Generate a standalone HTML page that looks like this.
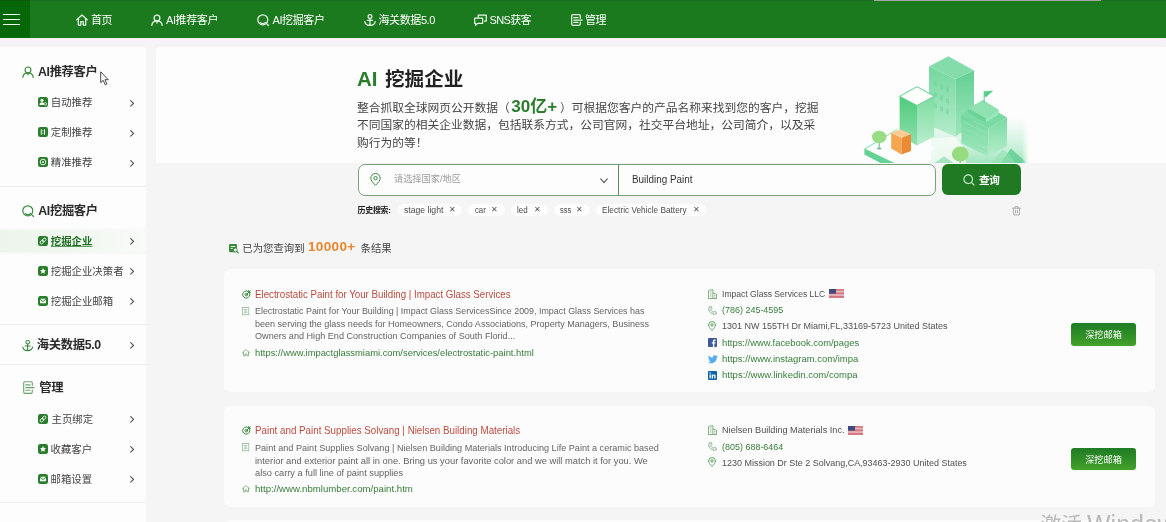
<!DOCTYPE html>
<html lang="zh-CN">
<head>
<meta charset="utf-8">
<title>AI 挖掘企业</title>
<style>
*{box-sizing:border-box;margin:0;padding:0}
html,body{width:1166px;height:522px;overflow:hidden;background:#f6f5f6;font-family:"Liberation Sans","Noto Sans CJK SC",sans-serif;color:#333}
body{position:relative}
.a{position:absolute}
.t{position:absolute;white-space:nowrap;height:16px;line-height:16px}
svg{position:absolute;overflow:visible}
/* header */
#hdr{left:0;top:0;width:1166px;height:37.7px;background:#1a7a1d;border-top:1.5px solid #1c6c20}
#burger{left:0;top:0;width:30px;height:37.7px;background:#056707;border-top:1.5px solid #075a0a}
.nav{color:#fff;font-size:11px;letter-spacing:-.4px;top:12px}
/* sidebar */
#side{left:0;top:46.5px;width:146px;height:480px;background:#fdfdfd;border-top-right-radius:4px}
.sep{left:0;width:146px;height:1px;background:#f0f0f0}
.h{font-weight:bold;font-size:12.3px;color:#2b2b2b;letter-spacing:-.33px}
.s{font-size:10.4px;color:#444;margin-top:.4px}
.chev{width:4.300px;height:6.800px;margin-top:1px;margin-left:.500px}
.sq{width:10px;height:10px;border-radius:2.3px;background:#2a7d2d;margin-top:.9px}

/* main */
#strip{left:0;top:38px;width:1166px;height:9px;background:linear-gradient(180deg,#f9f2f9 0,#f8f1f8 55%,#f4f4f4 60%,#f4f4f4 100%)}
#banner{left:156px;top:46.5px;width:1010px;height:116.5px;background:#fdfdfd;border-top-left-radius:4px}
.d{font-size:11.75px;color:#444;letter-spacing:0}
#sbox{left:357.5px;top:163.5px;width:578.4px;height:32px;border:1px solid #78a07a;border-radius:7px;background:#fdfdfd}
#sbtn{left:942px;top:164px;width:78.5px;height:31px;border-radius:6px;background:#1f7a23}
.pill{height:12.2px;border-radius:7px;background:#fdfdfd;top:203.6px}
.tg{font-size:8.4px;color:#4a4a4a;top:201.700px}
.x{font-size:8px;color:#555;top:202px}

.card{left:223.8px;width:930.8px;background:#fdfcfd;border-radius:6.5px}
.ti{font-size:10.8px;color:#b84b3d}
.ds{font-size:9.5px;color:#646464;height:13px;line-height:13px;margin-top:-.4px}
.u{font-size:9.8px;color:#347c38}
.r{font-size:9.6px;margin-top:.4px;color:#505050}
.rg{font-size:9.6px;margin-top:.4px;color:#367e3a}
.btn{left:1071px;width:65px;height:22.5px;border-radius:3px;background:linear-gradient(180deg,#1f7c25 0%,#2f8d27 50%,#45a22b 100%);color:#fff;font-size:9.2px;text-align:center;line-height:24px;white-space:nowrap;overflow:hidden}
</style>
</head>
<body>
<div id="root" style="position:absolute;left:0;top:0;width:1166px;height:522px;overflow:hidden;will-change:transform">
<!-- HEADER -->
<div id="hdr" class="a"></div>
<div id="burger" class="a"></div>
<div class="a" style="left:873.5px;top:0;width:227.5px;height:1.4px;background:#a6a6a2"></div>
<div class="a" style="left:3px;top:13.5px;width:17px;height:1.6px;background:#f2fbf2"></div>
<div class="a" style="left:3px;top:18.6px;width:17px;height:1.6px;background:#f2fbf2"></div>
<div class="a" style="left:3px;top:23.7px;width:17px;height:1.6px;background:#f2fbf2"></div>

<svg style="left:76px;top:13.8px" width="12" height="12" viewBox="0 0 12 12" fill="none" stroke="#e9f7e9" stroke-width="1.25" stroke-linejoin="round" stroke-linecap="round"><path d="M0.8 5.8 L6 1 L11.2 5.8 M2.3 5 V11 H4.8 V7.6 H7.2 V11 H9.7 V5"/></svg>
<div id="n1" class="t nav" style="left:91px">首页</div>

<svg style="left:151px;top:13.8px" width="12" height="12" viewBox="0 0 12 12" fill="none" stroke="#e9f7e9" stroke-width="1.25" stroke-linecap="round"><circle cx="6" cy="3.9" r="2.9"/><path d="M0.8 11.4 C1.2 8.2 3.4 6.9 6 6.9 S10.8 8.2 11.2 11.4 M6 7 V9"/></svg>
<div id="n2" class="t nav" style="left:166px">AI推荐客户</div>

<svg style="left:257px;top:13.8px" width="12" height="12" viewBox="0 0 12 12" fill="none" stroke="#e9f7e9" stroke-width="1.25" stroke-linecap="round"><circle cx="5.8" cy="5.8" r="5"/><path d="M3.2 8.6 C4.6 9.9 7.2 9.9 8.6 8.4 M9.6 9.6 L11.5 11.5"/></svg>
<div id="n3" class="t nav" style="left:272.5px">AI挖掘客户</div>

<svg style="left:364px;top:13.8px" width="12" height="12" viewBox="0 0 12 12" fill="none" stroke="#e9f7e9" stroke-width="1.25" stroke-linecap="round"><circle cx="6" cy="2.4" r="1.9"/><path d="M6 4.3 V11.3 M3.4 6.3 H8.6 M0.8 7.6 C1.2 10 3.4 11.3 6 11.3 S10.8 10 11.2 7.6"/></svg>
<div id="n4" class="t nav" style="left:378.5px">海关数据5.0</div>

<svg style="left:474px;top:13.8px" width="13" height="12" viewBox="0 0 13 12" fill="none" stroke="#e9f7e9" stroke-width="1.25" stroke-linejoin="round" stroke-linecap="round"><path d="M4.2 3.2 V1 H12.3 V7 H10.4 M0.7 4.2 H8.6 V9.4 H3.6 L1.6 11.3 V9.4 H0.7 Z"/></svg>
<div id="n5" class="t nav" style="left:489.5px;letter-spacing:-.65px">SNS获客</div>

<svg style="left:571px;top:13.8px" width="12" height="12" viewBox="0 0 12 12" fill="none" stroke="#e9f7e9" stroke-width="1.25" stroke-linejoin="round" stroke-linecap="round"><path d="M9.3 4.2 V1.9 Q9.3 0.7 8.1 0.7 H1.9 Q0.7 0.7 0.7 1.9 V10.1 Q0.7 11.3 1.9 11.3 H8.1 Q9.3 11.3 9.3 10.1 V8 M2.8 3.6 H7 M2.8 6 H11.2 M2.8 8.4 H7"/></svg>
<div id="n6" class="t nav" style="left:585px">管理</div>

<!-- SIDEBAR -->
<div id="side" class="a"></div>
<div class="a" style="left:0;top:229.500px;width:146px;height:22.500px;background:linear-gradient(90deg,#ecf4eb 0%,#f1f7f0 50%,#f9fbf9 100%);box-shadow:0 0 2px 1.5px #f4f8f3;clip-path:inset(-4px 0 -4px 0)"></div>
<div class="a sep" style="top:186px"></div>
<div class="a sep" style="top:324px"></div>
<div class="a sep" style="top:364px"></div>
<div class="a sep" style="top:502px"></div>


<!-- sidebar group 1 -->
<svg style="left:22px;top:66px" width="12" height="12" viewBox="0 0 12 12" fill="none" stroke="#3a8a3d" stroke-width="1.15" stroke-linecap="round"><circle cx="6" cy="3.9" r="2.9"/><path d="M0.8 11.4 C1.2 8.2 3.4 6.9 6 6.9 S10.8 8.2 11.2 11.4 M6 7 V9"/></svg>
<div id="s1" class="t h" style="left:38px;top:64px">AI推荐客户</div>
<!-- cursor -->
<svg style="left:100px;top:71px" width="9" height="15" viewBox="0 0 9 15"><path d="M0.7 0.8 V11.6 L3.2 9.3 L5.2 13.8 L6.9 13 L4.9 8.7 H8.2 Z" fill="#fff" stroke="#333" stroke-width="0.9" stroke-linejoin="round"/></svg>

<div class="a sq" style="left:38px;top:96.400px"></div>
<svg style="left:38px;top:96.400px;margin-top:.9px" width="10" height="10" viewBox="0 0 11 11" fill="#fff"><circle cx="4.4" cy="3.6" r="1.7"/><path d="M1.6 8.9 C1.6 6.6 2.8 5.7 4.4 5.7 C5.4 5.7 6 6 6.4 6.6 L6.4 8.9 Z"/><circle cx="8" cy="7.6" r="1.4" fill="none" stroke="#fff" stroke-width=".8"/></svg>
<div id="s2" class="t s" style="left:50.8px;top:95px">自动推荐</div>
<svg class="chev" style="left:129.5px;top:98.5px" viewBox="0 0 5 8" fill="none" stroke="#4a4a4a" stroke-width="1.25" stroke-linecap="round" stroke-linejoin="round"><path d="M0.8 0.8 L4.2 4 L0.8 7.2"/></svg>

<div class="a sq" style="left:38px;top:126.400px"></div>
<svg style="left:38px;top:126.400px;margin-top:.9px" width="10" height="10" viewBox="0 0 11 11" fill="none" stroke="#fff" stroke-width="1"><path d="M3.6 2.5 V8.5 M7.2 2.5 V8.5 M5.4 3.5 V4.6 M5.4 6.4 V7.5"/></svg>
<div id="s3" class="t s" style="left:50.8px;top:125px">定制推荐</div>
<svg class="chev" style="left:129.5px;top:128.5px" viewBox="0 0 5 8" fill="none" stroke="#4a4a4a" stroke-width="1.25" stroke-linecap="round" stroke-linejoin="round"><path d="M0.8 0.8 L4.2 4 L0.8 7.2"/></svg>

<div class="a sq" style="left:38px;top:156.400px"></div>
<svg style="left:38px;top:156.400px;margin-top:.9px" width="10" height="10" viewBox="0 0 11 11" fill="none" stroke="#fff" stroke-width="1"><circle cx="5.5" cy="5.5" r="3.1"/><circle cx="5.5" cy="5.5" r="1" fill="#fff" stroke="none"/></svg>
<div id="s4" class="t s" style="left:50.8px;top:155px">精准推荐</div>
<svg class="chev" style="left:129.5px;top:158.5px" viewBox="0 0 5 8" fill="none" stroke="#4a4a4a" stroke-width="1.25" stroke-linecap="round" stroke-linejoin="round"><path d="M0.8 0.8 L4.2 4 L0.8 7.2"/></svg>

<!-- sidebar group 2 -->
<svg style="left:22.300px;top:204.900px" width="12" height="12" viewBox="0 0 12 12" fill="none" stroke="#3a8a3d" stroke-width="1.15" stroke-linecap="round"><circle cx="5.8" cy="5.8" r="5"/><path d="M3.2 8.6 C4.6 9.9 7.2 9.9 8.6 8.4 M9.6 9.6 L11.5 11.5"/></svg>
<div id="s5" class="t h" style="left:38.300px;top:202.700px">AI挖掘客户</div>

<div class="a sq" style="left:38px;top:235.5px"></div>
<svg style="left:38px;top:235.5px;margin-top:.9px" width="10" height="10" viewBox="0 0 11 11" fill="none" stroke="#fff" stroke-width=".95" stroke-linecap="round"><g transform="rotate(-45 5.500 5.500)"><rect x="1.600" y="4" width="4.600" height="3" rx="1.500"/><rect x="4.800" y="4" width="4.600" height="3" rx="1.500"/></g></svg>
<div id="s6" class="t s" style="left:50.8px;top:233.5px;color:#1f6f23;font-weight:bold;text-decoration:underline;text-underline-offset:1px;text-decoration-thickness:.7px;text-decoration-color:#5d9a60">挖掘企业</div>
<svg class="chev" style="left:129.5px;top:237px" viewBox="0 0 5 8" fill="none" stroke="#4a4a4a" stroke-width="1.25" stroke-linecap="round" stroke-linejoin="round"><path d="M0.8 0.8 L4.2 4 L0.8 7.2"/></svg>

<div class="a sq" style="left:38px;top:265.5px"></div>
<svg style="left:38px;top:265.5px;margin-top:.9px" width="10" height="10" viewBox="0 0 11 11" fill="#fff"><path d="M5.5 2.2 L6.5 4.3 L8.8 4.6 L7.1 6.2 L7.5 8.5 L5.5 7.4 L3.5 8.5 L3.9 6.2 L2.2 4.6 L4.5 4.3 Z"/></svg>
<div id="s7" class="t s" style="left:50.8px;top:263.5px">挖掘企业决策者</div>
<svg class="chev" style="left:129.5px;top:267px" viewBox="0 0 5 8" fill="none" stroke="#4a4a4a" stroke-width="1.25" stroke-linecap="round" stroke-linejoin="round"><path d="M0.8 0.8 L4.2 4 L0.8 7.2"/></svg>

<div class="a sq" style="left:38px;top:295.5px"></div>
<svg style="left:38px;top:295.5px;margin-top:.9px" width="10" height="10" viewBox="0 0 11 11" fill="#fff"><path d="M2.3 3.1 H8.7 L5.5 5.6 Z M2.3 4.1 L5.5 6.6 L8.7 4.1 V7.9 H2.3 Z"/></svg>
<div id="s8" class="t s" style="left:50.8px;top:293.5px">挖掘企业邮箱</div>
<svg class="chev" style="left:129.5px;top:297px" viewBox="0 0 5 8" fill="none" stroke="#4a4a4a" stroke-width="1.25" stroke-linecap="round" stroke-linejoin="round"><path d="M0.8 0.8 L4.2 4 L0.8 7.2"/></svg>

<!-- sidebar group 3 -->
<svg style="left:22.300px;top:339.700px" width="11.300" height="11.300" viewBox="0 0 12 12" fill="none" stroke="#3a8a3d" stroke-width="1.15" stroke-linecap="round"><circle cx="6" cy="2.4" r="1.9"/><path d="M6 4.3 V11.3 M3.4 6.3 H8.6 M0.8 7.6 C1.2 10 3.4 11.3 6 11.3 S10.8 10 11.2 7.6"/></svg>
<div id="s9" class="t h" style="left:36.800px;top:337.300px">海关数据5.0</div>
<svg class="chev" style="left:129.5px;top:340.5px" viewBox="0 0 5 8" fill="none" stroke="#4a4a4a" stroke-width="1.25" stroke-linecap="round" stroke-linejoin="round"><path d="M0.8 0.8 L4.2 4 L0.8 7.2"/></svg>

<!-- sidebar group 4 -->
<svg style="left:22.700px;top:380.800px" width="12" height="13.200" preserveAspectRatio="none" viewBox="0 0 12 12" fill="none" stroke="#6aa56e" stroke-width="1.1" stroke-linejoin="round" stroke-linecap="round"><path d="M9.3 4.2 V1.9 Q9.3 0.7 8.1 0.7 H1.9 Q0.7 0.7 0.7 1.9 V10.1 Q0.7 11.3 1.9 11.3 H8.1 Q9.3 11.3 9.3 10.1 V8 M2.8 3.6 H7 M2.8 6 H11.2 M2.8 8.4 H7"/></svg>
<div id="s10" class="t h" style="left:39.300px;top:380px">管理</div>

<div class="a sq" style="left:38px;top:413.5px"></div>
<svg style="left:38px;top:413.5px;margin-top:.9px" width="10" height="10" viewBox="0 0 11 11" fill="none" stroke="#fff" stroke-width=".95" stroke-linecap="round"><g transform="rotate(-45 5.500 5.500)"><rect x="1.600" y="4" width="4.600" height="3" rx="1.500"/><rect x="4.800" y="4" width="4.600" height="3" rx="1.500"/></g></svg>
<div id="s11" class="t s" style="left:51.6px;top:411.5px">主页绑定</div>
<svg class="chev" style="left:129.5px;top:415px" viewBox="0 0 5 8" fill="none" stroke="#4a4a4a" stroke-width="1.25" stroke-linecap="round" stroke-linejoin="round"><path d="M0.8 0.8 L4.2 4 L0.8 7.2"/></svg>

<div class="a sq" style="left:38px;top:443.5px"></div>
<svg style="left:38px;top:443.5px;margin-top:.9px" width="10" height="10" viewBox="0 0 11 11" fill="#fff"><path d="M5.5 2.2 L6.5 4.3 L8.8 4.6 L7.1 6.2 L7.5 8.5 L5.5 7.4 L3.5 8.5 L3.9 6.2 L2.2 4.6 L4.5 4.3 Z"/></svg>
<div id="s12" class="t s" style="left:50.6px;top:441.5px">收藏客户</div>
<svg class="chev" style="left:129.5px;top:445px" viewBox="0 0 5 8" fill="none" stroke="#4a4a4a" stroke-width="1.25" stroke-linecap="round" stroke-linejoin="round"><path d="M0.8 0.8 L4.2 4 L0.8 7.2"/></svg>

<div class="a sq" style="left:38px;top:473.5px"></div>
<svg style="left:38px;top:473.5px;margin-top:.9px" width="10" height="10" viewBox="0 0 11 11" fill="#fff"><path d="M2.3 3.1 H8.7 L5.5 5.6 Z M2.3 4.1 L5.5 6.6 L8.7 4.1 V7.9 H2.3 Z"/></svg>
<div id="s13" class="t s" style="left:50.6px;top:471.5px">邮箱设置</div>
<svg class="chev" style="left:129.5px;top:475px" viewBox="0 0 5 8" fill="none" stroke="#4a4a4a" stroke-width="1.25" stroke-linecap="round" stroke-linejoin="round"><path d="M0.8 0.8 L4.2 4 L0.8 7.2"/></svg>


<!-- MAIN -->
<div id="strip" class="a"></div>
<div id="banner" class="a"></div>

<!-- banner illustration -->
<svg id="ill" style="left:850px;top:46.5px;overflow:hidden" width="190" height="116.5" viewBox="850 46.5 190 116.5">
<defs>
<linearGradient id="gfade" x1="0" y1="0" x2="0" y2="1"><stop offset="0" stop-color="#8fe3b4" stop-opacity="0"/><stop offset=".45" stop-color="#9be6bb" stop-opacity=".35"/><stop offset="1" stop-color="#7fdca6" stop-opacity=".75"/></linearGradient>
<linearGradient id="gfadeh" x1="0" y1="0" x2="1" y2="0"><stop offset="0" stop-color="#fff" stop-opacity="0"/><stop offset=".75" stop-color="#fff" stop-opacity="0"/><stop offset="1" stop-color="#fdfdfd" stop-opacity="1"/></linearGradient>
<linearGradient id="gtl" x1="0" y1="0" x2="0" y2="1"><stop offset="0" stop-color="#74d79f"/><stop offset="1" stop-color="#b4edcb"/></linearGradient>
<linearGradient id="gtr" x1="0" y1="0" x2="0" y2="1"><stop offset="0" stop-color="#62d093"/><stop offset="1" stop-color="#9fe6bd"/></linearGradient>
<linearGradient id="gml" x1="0" y1="0" x2="0" y2="1"><stop offset="0" stop-color="#4fcb7c"/><stop offset="1" stop-color="#8fe0ae"/></linearGradient>
<linearGradient id="gmr" x1="0" y1="0" x2="0" y2="1"><stop offset="0" stop-color="#7fdca3"/><stop offset="1" stop-color="#b9eecd"/></linearGradient>
<linearGradient id="grl" x1="0" y1="0" x2="0" y2="1"><stop offset="0" stop-color="#6ed69a"/><stop offset="1" stop-color="#a5e8c1"/></linearGradient>
<linearGradient id="grr" x1="0" y1="0" x2="0" y2="1"><stop offset="0" stop-color="#7adaa2"/><stop offset="1" stop-color="#b7eecd"/></linearGradient>
</defs>
<!-- faded ground -->
<rect x="931" y="117" width="98" height="47" fill="url(#gfade)"/>
<polygon points="931,163.5 931,138 955,136 966,150 966,163.5" fill="#f4fcf7" opacity=".85"/>
<polygon points="1000,163.5 1011,148 1028,163.5" fill="#4fc987" opacity=".7"/>
<polygon points="933,163.5 944,156 955,163.5" fill="#5fcf92" opacity=".5"/>
<polygon points="990,163.5 1003,149 1010,155 1016,163.5" fill="#8fe3b4" opacity=".6"/>
<rect x="1000" y="117" width="29" height="47" fill="url(#gfadeh)"/>
<!-- platform -->
<polygon points="864.4,148 896.7,128.4 935,148 900,168" fill="#fbfefc"/>
<polygon points="864.4,148 864.4,154 883,163.800 897,163.800" fill="#63d293"/>
<polygon points="864.4,148 896.7,128.4 897.5,129.3 866,148.4" fill="#9fe6bd"/>
<!-- tall building -->
<polygon points="929,66 955.4,78.5 955.4,136 929,125" fill="url(#gtl)"/>
<polygon points="955.4,78.5 974,70 974,124 955.4,136" fill="url(#gtr)"/>
<polygon points="948.2,55.8 974,70 955.4,78.5 929,66" fill="#84dcab"/>
<g fill="#6ad398" opacity=".5"><rect x="934" y="80" width="3" height="5" transform="skewY(25)" style="transform-box:fill-box"/><rect x="940" y="83" width="3" height="5" transform="skewY(25)" style="transform-box:fill-box"/><rect x="946" y="86" width="3" height="5" transform="skewY(25)" style="transform-box:fill-box"/><rect x="934" y="91" width="3" height="5" transform="skewY(25)" style="transform-box:fill-box"/><rect x="940" y="94" width="3" height="5" transform="skewY(25)" style="transform-box:fill-box"/><rect x="946" y="97" width="3" height="5" transform="skewY(25)" style="transform-box:fill-box"/><rect x="934" y="102" width="3" height="5" transform="skewY(25)" style="transform-box:fill-box"/><rect x="940" y="105" width="3" height="5" transform="skewY(25)" style="transform-box:fill-box"/><rect x="946" y="108" width="3" height="5" transform="skewY(25)" style="transform-box:fill-box"/></g>
<!-- medium building -->
<polygon points="899.6,95.8 917,105 917,145 899.6,135" fill="url(#gml)"/>
<polygon points="917,105 934.3,95.8 934.3,136 917,145" fill="url(#gmr)"/>
<polygon points="917,86.2 934.3,95.8 917,105 899.6,95.8" fill="#fdfffd" stroke="#63d090" stroke-width="1"/>
<!-- right stepped building -->
<polygon points="961.4,114.5 988.5,127.7 988.5,156.4 961.4,142.7" fill="url(#grl)"/>
<polygon points="988.5,127.7 1007,116.9 1007,145.6 988.5,156.4" fill="url(#grr)"/>
<polygon points="961.4,114.5 980.6,101.3 1007,116.9 988.5,127.7" fill="#7adaa3"/>
<polygon points="968,108 983,99.5 999,109.5 986,118" fill="#8fe1b1"/>
<polygon points="968,108 986,118 986,122 968,112" fill="#69d496"/>
<polygon points="986,118 999,109.5 999,113.500 986,122" fill="#9ae5b9"/>
<g stroke="#8fe2b1" stroke-width="1.6" opacity=".8"><path d="M963 121 L987 133 M963 127 L987 139 M963 133 L987 145 M963 139 L987 151"/></g>
<path d="M984.2 90.500 V102" stroke="#4cc381" stroke-width=".9"/>
<polygon points="984.2,91 993.3,90 986.2,96.5 984.2,96" fill="#58cc8b"/>
<!-- orange box -->
<polygon points="891.2,132.4 901.5,137.2 901.5,154 891.2,148" fill="#f6a651"/>
<polygon points="901.5,137.2 911,133.6 911,150.4 901.5,154" fill="#ea8a35"/>
<polygon points="891.2,132.4 900.3,128.9 911,133.6 901.5,137.2" fill="#fbcb96"/>
<!-- trees -->
<ellipse cx="879.2" cy="148" rx="2.4" ry="1" fill="#7fb7a0"/>
<path d="M879.2 140 V147.500" stroke="#6fbf8a" stroke-width="1.1"/>
<ellipse cx="879.2" cy="136.500" rx="7.2" ry="6.200" fill="#98dc83"/>
<path d="M960.200 156 V164" stroke="#6fbf8a" stroke-width="1.200"/>
<ellipse cx="960.200" cy="153.500" rx="8.400" ry="7.600" fill="#96db7f"/>
</svg>
<div id="side2" class="a" style="left:0;top:46.5px;width:146px;height:10px;background:#fdfdfd;border-top-right-radius:4px"></div>
<div id="bt1" class="t" style="left:357px;top:66px;height:26px;line-height:26px;font-size:20.5px;font-weight:bold;color:#2a7d2d">AI</div>
<div id="bt2" class="t" style="left:385px;top:66px;height:26px;line-height:26px;font-size:19.6px;font-weight:bold;color:#222">挖掘企业</div>
<div id="d1" class="t d" style="left:357px;top:98.5px">整合抓取全球网页公开数据（<span id="d1b" style="font-size:17px;font-weight:bold;color:#2a7d2d;margin:0 3px 0 1.5px">30亿+</span>）<span id="d1c">可根据</span>您客户的产品名称来找到您的客户，挖掘</div>
<div id="d2" class="t d" style="left:357px;top:117px">不同国家的相关企业数据，包括联系方式，公司官网，社交平台地址，公司简介，以及采</div>
<div id="d3" class="t d" style="left:357px;top:134.5px">购行为的等！</div>

<div id="sbox" class="a"></div>
<div class="a" style="left:618px;top:164px;width:1px;height:31px;background:#5f8a61"></div>
<svg style="left:370px;top:172.500px" width="11" height="13" viewBox="0 0 11 13" fill="none" stroke="#3a8a3d" stroke-width="1"><path d="M5.5 12.3 C2.6 9.4 0.8 7.4 0.8 5.2 A4.7 4.7 0 0 1 10.2 5.2 C10.2 7.4 8.4 9.4 5.5 12.3 Z"/><circle cx="5.5" cy="5.2" r="1.7"/></svg>
<div id="ph" class="t" style="left:394px;top:171.2px;font-size:9.2px;color:#9c9c9c">请选择国家/地区</div>
<svg style="left:600px;top:177.5px" width="8" height="6" viewBox="0 0 8 6" fill="none" stroke="#555" stroke-width="1.1" stroke-linecap="round" stroke-linejoin="round"><path d="M0.7 0.9 L4 4.6 L7.3 0.9"/></svg>
<div id="kw" class="t" style="left:632px;top:171.5px;font-size:10px;color:#333;transform-origin:0 50%;transform:scaleX(0.9902)">Building Paint</div>

<div id="sbtn" class="a"></div>
<svg style="left:962.5px;top:173.5px" width="12" height="12" viewBox="0 0 12 12" fill="none" stroke="#c9f0c9" stroke-width="1.2" stroke-linecap="round"><circle cx="5.2" cy="5.2" r="4.3"/><path d="M8.4 8.4 L11 11"/></svg>
<div id="q" class="t" style="left:979px;top:171.5px;font-size:10.6px;font-weight:bold;color:#fff;letter-spacing:-.3px">查询</div>

<div id="hs" class="t" style="left:357.5px;top:202.5px;font-size:8px;font-weight:bold;color:#222;letter-spacing:-.3px">历史搜索:</div>
<div class="a pill" style="left:398px;width:64px"></div>
<div id="g1" class="t tg" style="left:404px;transform-origin:0 50%;transform:scaleX(1.0314)">stage light</div><div class="t x" style="left:449px">✕</div>
<div class="a pill" style="left:468px;width:36.5px"></div>
<div id="g2" class="t tg" style="left:475px;transform-origin:0 50%;transform:scaleX(0.9224)">car</div><div class="t x" style="left:491px">✕</div>
<div class="a pill" style="left:510.5px;width:37px"></div>
<div id="g3" class="t tg" style="left:517px;transform-origin:0 50%;transform:scaleX(0.9554)">led</div><div class="t x" style="left:534px">✕</div>
<div class="a pill" style="left:553.5px;width:36px"></div>
<div id="g4" class="t tg" style="left:559.8px;transform-origin:0 50%;transform:scaleX(0.8889)">sss</div><div class="t x" style="left:576px">✕</div>
<div class="a pill" style="left:595.5px;width:110px"></div>
<div id="g5" class="t tg" style="left:602px;transform-origin:0 50%;transform:scaleX(0.9883)">Electric Vehicle Battery</div><div id="x5" class="t x" style="left:692.5px">✕</div>
<svg style="left:1012px;top:206px" width="9" height="9.5" viewBox="0 0 9 9.5" fill="none" stroke="#a8a8a8" stroke-width=".9" stroke-linecap="round" stroke-linejoin="round"><path d="M0.5 2.2 H8.5 M3 2.2 V0.7 H6 V2.2 M1.3 2.2 L1.7 9 H7.3 L7.7 2.2 M3.5 4.2 V7 M5.5 4.2 V7"/></svg>


<!-- RESULTS -->
<svg style="left:229.200px;top:244px" width="10" height="9" viewBox="0 0 10 9"><rect x="0" y="0" width="8" height="8.200" rx="1.200" fill="#3a8a3d"/><path d="M1.800 2.500 H6.200 M1.800 4.500 H3.600" stroke="#fff" stroke-width=".9" fill="none"/><circle cx="6.300" cy="6" r="1.900" fill="#fdfdfd" stroke="#3a8a3d" stroke-width=".9"/><path d="M7.700 7.400 L9.300 8.800" stroke="#3a8a3d" stroke-width="1.100" stroke-linecap="round"/></svg>
<div id="rc1" class="t" style="left:242.3px;top:241px;font-size:10.4px;color:#444">已为您查询到</div>
<div id="rc2" class="t" style="left:308.3px;top:239.3px;font-size:13.4px;font-weight:bold;color:#ea862b;letter-spacing:.3px;transform-origin:0 50%;transform:scaleX(1.0128)">10000+</div>
<div id="rc3" class="t" style="left:360.6px;top:241px;font-size:10.4px;color:#444">条结果</div>

<div class="a card" style="top:269.2px;height:123px"></div>
<svg style="left:241.8px;top:289.5px" width="9" height="9" viewBox="0 0 9 9" fill="none" stroke="#3a8a3d" stroke-width="1" stroke-linecap="round"><path d="M7.6 3.2 A3.6 3.6 0 1 1 5.6 1.2"/><circle cx="4.3" cy="4.7" r="1.3"/><path d="M4.6 4.4 L8.2 0.8 M6.6 0.6 V2.4 H8.4"/></svg>
<svg style="left:242.200px;top:306.5px" width="7.200" height="8.200" preserveAspectRatio="none" viewBox="0 0 8.5 9" fill="none" stroke="#8dbb90" stroke-width=".9"><rect x=".5" y=".5" width="7.5" height="8"/><path d="M2.4 2.8 H6.1 M2.4 4.5 H6.1 M2.4 6.2 H6.1"/></svg>
<svg style="left:242px;top:348.7px" width="8" height="7.500" preserveAspectRatio="none" viewBox="0 0 9 9" fill="none" stroke="#6aa56e" stroke-width=".9" stroke-linejoin="round" stroke-linecap="round"><path d="M0.6 4.4 L4.5 0.7 L8.4 4.4 M1.7 3.8 V8.2 H3.6 V5.9 H5.4 V8.2 H7.3 V3.8"/></svg>
<svg style="left:707.8px;top:289px" width="9" height="10" viewBox="0 0 9 10" fill="none" stroke="#6aa56e" stroke-width=".85" stroke-linejoin="round"><path d="M0.5 9.5 V1.6 L4.9 0.5 V9.5 M4.9 4 L8.5 5 V9.5 M0 9.5 H9 M2 3 H3.4 M2 5 H3.4 M2 7 H3.4 M6.2 6.5 H7.2 M6.2 8 H7.2"/></svg>
<svg style="left:708px;top:305.5px" width="9" height="9" viewBox="0 0 9 9" fill="none" stroke="#6aa56e" stroke-width=".85" stroke-linejoin="round" stroke-linecap="round"><path d="M2.7 0.6 L1 1.2 C0.3 3.4 1.2 5.2 2.6 6.5 C4 7.9 5.7 8.7 7.8 8 L8.4 6.3 L6.4 5.3 L5.5 6.3 C4.3 5.8 3.2 4.7 2.8 3.6 L3.7 2.7 Z"/></svg>
<svg style="left:708.3px;top:321px" width="8" height="10" viewBox="0 0 8 10" fill="none" stroke="#4c9650" stroke-width=".9"><path d="M4 9.4 C1.8 7.2 0.6 5.7 0.6 3.9 A3.4 3.4 0 0 1 7.4 3.9 C7.4 5.7 6.2 7.2 4 9.4 Z"/><circle cx="4" cy="3.9" r="1.2"/></svg>

<div id="c1t" class="t ti" style="left:255.400px;top:286px;transform-origin:0 50%;transform:scaleX(0.8991)">Electrostatic Paint for Your Building | Impact Glass Services</div>
<div id="c1a" class="t ds" style="left:255.2px;top:304.5px;transform-origin:0 50%;transform:scaleX(0.9374)">Electrostatic Paint for Your Building | Impact Glass ServicesSince 2009, Impact Glass Services has</div>
<div id="c1b" class="t ds" style="left:255.2px;top:317px;transform-origin:0 50%;transform:scaleX(0.9505)">been serving the glass needs for Homeowners, Condo Associations, Property Managers, Business</div>
<div id="c1c" class="t ds" style="left:255.2px;top:329.5px;transform-origin:0 50%;transform:scaleX(0.9570)">Owners and High End Construction Companies of South Florid...</div>
<div id="c1u" class="t u" style="left:255.2px;top:344.5px;transform-origin:0 50%;transform:scaleX(0.9571)">https://www.impactglassmiami.com/services/electrostatic-paint.html</div>
<div id="c1r1" class="t r" style="left:721.5px;top:285.7px;transform-origin:0 50%;transform:scaleX(0.8928)">Impact Glass Services LLC</div>
<svg style="left:828.6px;top:289.3px" width="15" height="9" viewBox="0 0 15 9"><rect width="15" height="9" fill="#f3e6e8"/><g fill="#c8505e"><rect y="0" width="15" height=".75"/><rect y="1.4" width="15" height=".75"/><rect y="2.8" width="15" height=".75"/><rect y="4.2" width="15" height=".75"/><rect y="5.6" width="15" height=".75"/><rect y="7" width="15" height=".75"/><rect y="8.3" width="15" height=".7"/></g><rect width="7" height="4.6" fill="#3d4a7a"/></svg>
<div id="c1r2" class="t rg" style="left:721.5px;top:302px;transform-origin:0 50%;transform:scaleX(0.9345)">(786) 245-4595</div>
<div id="c1r3" class="t r" style="left:721.5px;top:318px;transform-origin:0 50%;transform:scaleX(0.9376)">1301 NW 155TH Dr Miami,FL,33169-5723 United States</div>
<svg style="left:708px;top:338px" width="9" height="9" viewBox="0 0 9 9"><rect width="9" height="9" rx=".8" fill="#3b5998"/><path d="M6.3 9 V5.6 H7.4 L7.6 4.2 H6.3 V3.4 C6.3 3 6.4 2.7 7 2.7 H7.7 V1.5 C7.5 1.5 7.1 1.4 6.6 1.4 C5.6 1.4 4.9 2 4.9 3.2 V4.2 H3.8 V5.6 H4.9 V9 Z" fill="#fff"/></svg>
<div id="c1r4" class="t rg" style="left:721.5px;top:334.5px;transform-origin:0 50%;transform:scaleX(0.9779)">https://www.facebook.com/pages</div>
<svg style="left:707.5px;top:354.5px" width="10" height="8.5" viewBox="0 0 24 20"><path d="M23.6 2.4 c-.9.4-1.800.7-2.800.8 1-.6 1.800-1.600 2.100-2.700-.9.600-2 1-3.100 1.200-.9-.9-2.200-1.500-3.600-1.500-2.700 0-4.900 2.200-4.900 4.900 0 .4 0 .8.100 1.100-4-.2-7.600-2.100-10-5.100-.4.700-.7 1.600-.7 2.500 0 1.700.9 3.200 2.200 4.100-.8 0-1.600-.2-2.200-.6v.1c0 2.400 1.700 4.400 3.900 4.800-.4.100-.8.200-1.300.2-.3 0-.6 0-.9-.1.600 1.900 2.400 3.400 4.600 3.400-1.700 1.300-3.800 2.100-6.100 2.100-.4 0-.8 0-1.200-.1 2.200 1.400 4.800 2.200 7.500 2.200 9.100 0 14-7.500 14-14v-.6c1-.7 1.800-1.600 2.400-2.600z" fill="#55acee"/></svg>
<div id="c1r5" class="t rg" style="left:721.5px;top:350.7px;transform-origin:0 50%;transform:scaleX(0.9862)">https://www.instagram.com/impa</div>
<svg style="left:708px;top:370.5px" width="9" height="9" viewBox="0 0 9 9"><rect width="9" height="9" rx=".8" fill="#0e63a8"/><path d="M1.5 3.5 H2.8 V7.6 H1.5 Z M3.7 3.5 H4.9 V4.1 C5.2 3.6 5.7 3.4 6.2 3.4 C7.3 3.4 7.6 4.100 7.600 5.100 V7.600 H6.300 V5.400 C6.300 4.900 6.200 4.500 5.700 4.500 C5.200 4.500 5 4.900 5 5.400 V7.600 H3.700 Z" fill="#fff"/><circle cx="2.15" cy="2.1" r=".75" fill="#fff"/></svg>
<div id="c1r6" class="t rg" style="left:721.5px;top:367px;transform-origin:0 50%;transform:scaleX(0.9927)">https://www.linkedin.com/compa</div>
<div id="b1" class="a btn" style="top:323px">深挖邮箱</div>

<div class="a card" style="top:406px;height:100.7px"></div>
<svg style="left:241.8px;top:425.7px" width="9" height="9" viewBox="0 0 9 9" fill="none" stroke="#3a8a3d" stroke-width="1" stroke-linecap="round"><path d="M7.6 3.2 A3.6 3.6 0 1 1 5.6 1.2"/><circle cx="4.3" cy="4.7" r="1.3"/><path d="M4.6 4.4 L8.2 0.8 M6.6 0.6 V2.4 H8.4"/></svg>
<svg style="left:242.200px;top:442.7px" width="7.200" height="8.200" preserveAspectRatio="none" viewBox="0 0 8.5 9" fill="none" stroke="#8dbb90" stroke-width=".9"><rect x=".5" y=".5" width="7.5" height="8"/><path d="M2.4 2.8 H6.1 M2.4 4.5 H6.1 M2.4 6.2 H6.1"/></svg>
<svg style="left:242px;top:484.9px" width="8" height="7.500" preserveAspectRatio="none" viewBox="0 0 9 9" fill="none" stroke="#6aa56e" stroke-width=".9" stroke-linejoin="round" stroke-linecap="round"><path d="M0.6 4.4 L4.5 0.7 L8.4 4.4 M1.7 3.8 V8.2 H3.6 V5.9 H5.4 V8.2 H7.3 V3.8"/></svg>
<svg style="left:707.8px;top:425.2px" width="9" height="10" viewBox="0 0 9 10" fill="none" stroke="#6aa56e" stroke-width=".85" stroke-linejoin="round"><path d="M0.5 9.5 V1.6 L4.9 0.5 V9.5 M4.9 4 L8.5 5 V9.5 M0 9.5 H9 M2 3 H3.4 M2 5 H3.4 M2 7 H3.4 M6.2 6.5 H7.2 M6.2 8 H7.2"/></svg>
<svg style="left:708px;top:441.7px" width="9" height="9" viewBox="0 0 9 9" fill="none" stroke="#6aa56e" stroke-width=".85" stroke-linejoin="round" stroke-linecap="round"><path d="M2.7 0.6 L1 1.2 C0.3 3.4 1.2 5.2 2.6 6.5 C4 7.9 5.7 8.7 7.8 8 L8.4 6.3 L6.4 5.3 L5.5 6.3 C4.3 5.8 3.2 4.7 2.8 3.6 L3.7 2.7 Z"/></svg>
<svg style="left:708.3px;top:457.2px" width="8" height="10" viewBox="0 0 8 10" fill="none" stroke="#4c9650" stroke-width=".9"><path d="M4 9.4 C1.8 7.2 0.6 5.7 0.6 3.9 A3.4 3.4 0 0 1 7.4 3.9 C7.4 5.7 6.2 7.2 4 9.4 Z"/><circle cx="4" cy="3.9" r="1.2"/></svg>

<div id="c2t" class="t ti" style="left:255.400px;top:422.2px;transform-origin:0 50%;transform:scaleX(0.9060)">Paint and Paint Supplies Solvang | Nielsen Building Materials</div>
<div id="c2a" class="t ds" style="left:255.2px;top:441.5px;transform-origin:0 50%;transform:scaleX(0.9573)">Paint and Paint Supplies Solvang | Nielsen Building Materials Introducing Life Paint a ceramic based</div>
<div id="c2b" class="t ds" style="left:255.2px;top:454px;transform-origin:0 50%;transform:scaleX(0.9818)">interior and exterior paint all in one. Bring us your favorite color and we will match it for you. We</div>
<div id="c2c" class="t ds" style="left:255.2px;top:466.2px;transform-origin:0 50%;transform:scaleX(0.9705)">also carry a full line of paint supplies</div>
<div id="c2u" class="t u" style="left:255.2px;top:481.2px;transform-origin:0 50%;transform:scaleX(0.9826)">http://www.nbmlumber.com/paint.htm</div>
<div id="c2r1" class="t r" style="left:721.5px;top:421.7px;transform-origin:0 50%;transform:scaleX(0.9533)">Nielsen Building Materials Inc.</div>
<svg style="left:848px;top:425.5px" width="15" height="9" viewBox="0 0 15 9"><rect width="15" height="9" fill="#f3e6e8"/><g fill="#c8505e"><rect y="0" width="15" height=".75"/><rect y="1.4" width="15" height=".75"/><rect y="2.8" width="15" height=".75"/><rect y="4.2" width="15" height=".75"/><rect y="5.6" width="15" height=".75"/><rect y="7" width="15" height=".75"/><rect y="8.3" width="15" height=".7"/></g><rect width="7" height="4.6" fill="#3d4a7a"/></svg>
<div id="c2r2" class="t rg" style="left:721.5px;top:438.5px;transform-origin:0 50%;transform:scaleX(0.9345)">(805) 688-6464</div>
<div id="c2r3" class="t r" style="left:721.5px;top:454.7px;transform-origin:0 50%;transform:scaleX(0.9351)">1230 Mission Dr Ste 2 Solvang,CA,93463-2930 United States</div>
<div id="b2" class="a btn" style="top:447.7px">深挖邮箱</div>

<div class="a card" style="top:520.3px;height:100px"></div>
<div id="wm" class="t" style="left:1040.500px;top:510.600px;height:28px;line-height:28px;font-size:20.700px;color:#b9b9b9">激活</div>
<div id="wm2" class="t" style="left:1087px;top:508.300px;height:32px;line-height:32px;font-size:25px;color:#b9b9b9">Windows</div>

</div>
</body>
</html>
